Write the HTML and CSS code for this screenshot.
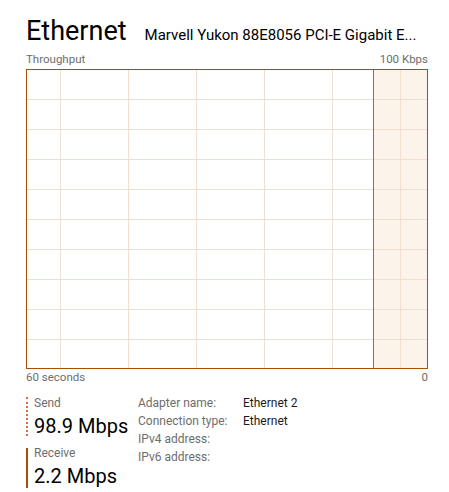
FILE: index.html
```html
<!DOCTYPE html>
<html lang="en">
<head>
  <meta charset="UTF-8" />
  <meta name="viewport" content="width=device-width, initial-scale=1.0" />
  <title>Ethernet</title>
  <link rel="stylesheet" href="styles.css">
</head>
<body>
  <div class="panel">
    <header class="title-row">
      <h1>Ethernet</h1>
      <span class="adapter">Marvell Yukon 88E8056 PCI-E Gigabit E...</span>
    </header>

    <div class="axis-row top">
      <span>Throughput</span>
      <span>100 Kbps</span>
    </div>

    <div class="chart">
      <svg width="400" height="298" viewBox="0 0 400 298">
        <!-- traffic fill (receive) -->
        <rect x="346" y="0" width="54" height="298" fill="#fcf3ea" />
        <g stroke="#f1dece" stroke-width="1">
          <line x1="0" y1="29.5" x2="400" y2="29.5" />
          <line x1="0" y1="59.5" x2="400" y2="59.5" />
          <line x1="0" y1="89.5" x2="400" y2="89.5" />
          <line x1="0" y1="119.5" x2="400" y2="119.5" />
          <line x1="0" y1="149.5" x2="400" y2="149.5" />
          <line x1="0" y1="179.5" x2="400" y2="179.5" />
          <line x1="0" y1="209.5" x2="400" y2="209.5" />
          <line x1="0" y1="239.5" x2="400" y2="239.5" />
          <line x1="0" y1="269.5" x2="400" y2="269.5" />
          <line x1="33.5" y1="0" x2="33.5" y2="298" />
          <line x1="101.5" y1="0" x2="101.5" y2="298" />
          <line x1="169.5" y1="0" x2="169.5" y2="298" />
          <line x1="237.5" y1="0" x2="237.5" y2="298" />
          <line x1="305.5" y1="0" x2="305.5" y2="298" />
          <line x1="373.5" y1="0" x2="373.5" y2="298" />
        </g>
        <line x1="346.5" y1="0" x2="346.5" y2="298" stroke="#b8622c" stroke-width="1" />
      </svg>
    </div>

    <div class="axis-row bottom">
      <span>60 seconds</span>
      <span>0</span>
    </div>

    <div class="stats">
      <div class="legend">
        <div class="metric send">
          <div class="metric-label">Send</div>
          <div class="metric-value">98.9 Mbps</div>
        </div>
        <div class="metric receive">
          <div class="metric-label">Receive</div>
          <div class="metric-value">2.2 Mbps</div>
        </div>
      </div>

      <dl class="details">
        <dt>Adapter name:</dt>
        <dd>Ethernet 2</dd>
        <dt>Connection type:</dt>
        <dd>Ethernet</dd>
        <dt>IPv4 address:</dt>
        <dd></dd>
        <dt>IPv6 address:</dt>
        <dd></dd>
      </dl>
    </div>
  </div>
</body>
</html>
```

FILE: styles.css
```css
body {
  margin: 0;
  background: #fff;
  font-family: Roboto, 'Noto Sans', sans-serif;
  color: #000;
}

.panel {
  width: 402px;
  padding: 15px 0 0 26px;
}

.title-row {
  display: flex;
  align-items: baseline;
  gap: 18px;
  height: 32px;
  white-space: nowrap;
}

h1 {
  margin: 0;
  font-size: 27px;
  font-weight: normal;
  line-height: 32px;
}

.adapter {
  font-size: 15px;
}

.axis-row {
  display: flex;
  justify-content: space-between;
  font-size: 11.5px;
  line-height: 14px;
  color: #6d6d6d;
}

.axis-row.top {
  margin: 5px 0 3px;
}

.axis-row.bottom {
  margin-top: 1px;
}

.chart {
  border: 1px solid #a74f01;
  width: 400px;
  height: 298px;
}

.chart svg {
  display: block;
}

.stats {
  display: flex;
  align-items: flex-start;
  margin-top: 12px;
}

.legend {
  width: 112px;
  display: flex;
  flex-direction: column;
  gap: 4px;
}

.metric {
  position: relative;
  padding-left: 8px;
}

.metric::before {
  content: "";
  position: absolute;
  left: 0;
}

.metric.send::before {
  top: 1px;
  bottom: 6px;
  border-left: 2px dotted #dd6b33;
}

.metric.receive::before {
  top: 2px;
  bottom: 4px;
  border-left: 2px solid #a74f01;
}

.metric-label {
  font-size: 12px;
  line-height: 14px;
  color: #6d6d6d;
}

.metric-value {
  font-size: 20px;
  line-height: 32px;
}

.details {
  margin: -2px 0 0;
  display: grid;
  grid-template-columns: 105px auto;
  grid-auto-rows: 18px;
  font-size: 12px;
  line-height: 18px;
}

.details dt {
  color: #6d6d6d;
}

.details dd {
  margin: 0;
  color: #1a1a1a;
}
```
